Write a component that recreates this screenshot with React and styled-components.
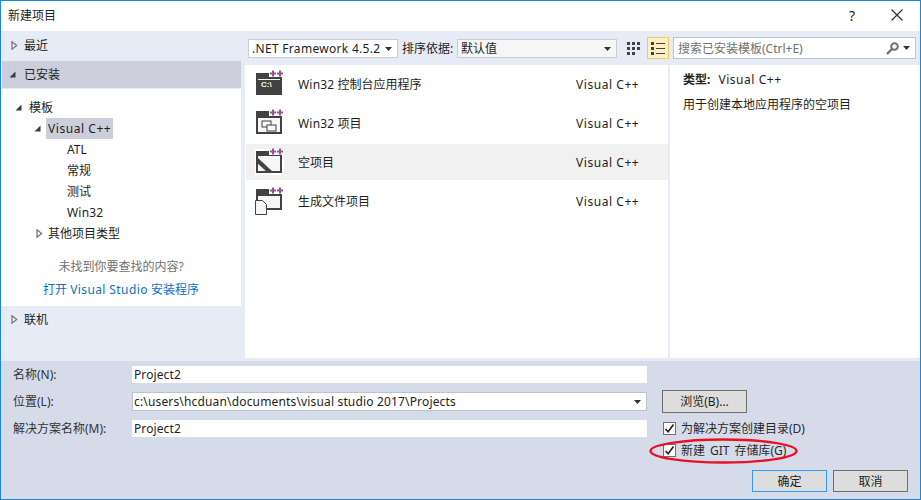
import React from 'react'
import styled, { createGlobalStyle } from 'styled-components'

const Global = createGlobalStyle`
  html, body { margin: 0; padding: 0; background: #fff; }
  body { font-family: "Noto Sans", "Noto Sans CJK SC", sans-serif; font-size: 12px; line-height: 17px; color: #1e1e1e; }
  * { box-sizing: border-box; }
`

// latin runs in the reference are wider than Noto Sans at this size
const Lat = styled.span`
  letter-spacing: ${p => (p.$s === undefined ? 0.55 : p.$s)}px;
`

const Window = styled.div`
  position: relative;
  width: 921px;
  height: 500px;
  border: 1px solid #1b86dc;
  display: flex;
  flex-direction: column;
  background: #fff;
  overflow: hidden;
`

const TitleBar = styled.div`
  height: 30px;
  display: flex;
  align-items: center;
  padding: 0 16px 2px 7px;
`
const Title = styled.div`
  flex: 1;
`
const HelpBtn = styled.div`
  width: 14px;
  font-size: 14px;
  margin-right: 31px;
  text-align: center;
`

const Main = styled.div`
  height: 330px;
  display: flex;
  background: #e6ebf5;
  padding-bottom: 3px;
`

const Sidebar = styled.div`
  width: 240px;
  display: flex;
  flex-direction: column;
`
const Section = styled.div`
  height: ${p => p.$h}px;
  display: flex;
  align-items: center;
  gap: 6px;
  padding: 0 0 2px 10px;
`
const ActiveSection = styled(Section)`
  gap: 8px;
  padding: 0 0 1px 7px;
  margin-left: 1px;
  background: #cccedb;
`
const SectionBottom = styled(Section)`
  align-items: flex-start;
  padding-top: 5px;
  flex: 1;

  svg {
    margin-top: 4px;
  }
`
const Tree = styled.div`
  height: 217px;
  background: #fff;
  margin-top: 1px;
  padding-top: 8px;
  display: flex;
  flex-direction: column;
`
const TreeRow = styled.div`
  height: 21px;
  line-height: 21px;
  display: flex;
  align-items: center;
  padding-left: ${p => p.$indent}px;
  gap: ${p => p.$gap || 7}px;
`
const Selected = styled.span`
  background: #cccedb;
  height: 21px;
  padding: 0 2px;
  margin-left: -2px;
`
const Hint = styled.div`
  margin-top: 12px;
  height: 21px;
  line-height: 21px;
  text-align: center;
  color: #717171;
`
const InstallLink = styled.div`
  margin-top: 2px;
  height: 21px;
  line-height: 21px;
  text-align: center;
  color: #0e70c0;
`

const Content = styled.div`
  flex: 1;
  display: flex;
  flex-direction: column;
  min-width: 0;
`
const Toolbar = styled.div`
  height: 34px;
  display: flex;
  align-items: center;
  padding-left: 7px;
`
const Combo = styled.div`
  width: ${p => p.$w}px;
  height: 19px;
  background: ${p => p.$bg || '#fff'};
  border: 1px solid #ccc;
  display: flex;
  align-items: center;
  justify-content: space-between;
  padding: 0 5px 0 3px;
  margin-top: 1px;
  white-space: nowrap;
`
const SortLabel = styled.div`
  width: 59px;
  padding-left: 4px;
  margin-top: 1px;
`
const ViewBtn = styled.div`
  width: 22px;
  height: 22px;
  margin-left: ${p => p.$ml}px;
  display: flex;
  align-items: center;
  justify-content: center;
  background: ${p => (p.$on ? '#fff0c4' : 'transparent')};
  border: 1px solid ${p => (p.$on ? '#f0c869' : 'transparent')};
`
const Search = styled.div`
  width: 243px;
  height: 22px;
  margin-left: 4px;
  background: #fff;
  border: 1px solid #bdc3ce;
  display: flex;
  align-items: center;
  justify-content: space-between;
  padding: 0 5px 0 4px;
  color: #717171;
`
const SearchIcons = styled.div`
  display: flex;
  align-items: center;
  gap: 4px;
`

const Panes = styled.div`
  flex: 1;
  display: flex;
  margin-left: 4px;
  background: #fff;
`
const List = styled.div`
  width: 425px;
  display: flex;
  flex-direction: column;
  gap: 3px;
  padding-top: 1px;
  border-right: 2px solid #e6ebf5;
`
const ListRow = styled.div`
  height: 36px;
  display: flex;
  align-items: center;
  margin-left: 1px;
  padding-left: 9px;
  background: ${p => (p.$active ? '#f1f1f1' : 'transparent')};
`
const RowIcon = styled.div`
  width: 30px;
  height: 30px;
  margin-right: 13px;
  flex: none;
`
const RowName = styled.div`
  width: 278px;
`
const Detail = styled.div`
  flex: 1;
  padding: 5px 13px;
`
const DetailLine = styled.div`
  height: 20px;
  line-height: 20px;
  margin-bottom: 5px;
`
const Bold = styled.span`
  font-weight: 700;
  margin-right: 8px;
`

const Footer = styled.div`
  flex: 1;
  background: #d6dbe9;
  display: grid;
  grid-template-columns: 119px 515px 1fr;
  grid-template-rows: 27px 27px 26px 1fr;
  padding: 4px 12px 0 12px;
  position: relative;
`
const FieldLabel = styled.div`
  color: #333;
  display: flex;
  align-items: center;
  height: 19px;
`
const Input = styled.div`
  height: 17px;
  background: #fff;
  margin-top: 1px;
  display: flex;
  align-items: center;
  padding: 0 5px 0 2px;
  white-space: nowrap;
`
const ComboInput = styled(Input)`
  height: 19px;
  margin-top: 0;
  border: 1px solid #bdc3ce;
  justify-content: space-between;
  padding-left: 1px;
`
const Button = styled.div`
  width: ${p => p.$w}px;
  height: ${p => p.$h}px;
  background: #dddddd;
  border: 1px solid ${p => (p.$primary ? '#3399ff' : '#707070')};
  display: flex;
  align-items: center;
  justify-content: center;
`
const BrowseCell = styled.div`
  padding-left: 15px;
  margin-top: -2px;
`
const Checks = styled.div`
  grid-column: 3;
  grid-row: 3 / 5;
  padding-left: 16px;
  display: flex;
  flex-direction: column;
  gap: 4px;
`
const CheckRow = styled.div`
  height: 18px;
  display: flex;
  align-items: center;
  gap: 5px;
  color: #2a2a2a;
`
const Box = styled.div`
  width: 13px;
  height: 13px;
  background: #fff;
  border: 1px solid #707070;
  display: flex;
  align-items: center;
  justify-content: center;
`
const Actions = styled.div`
  display: flex;
  gap: 6px;
  padding-left: 89px;
  margin-top: 7px;
`
const Ellipse = styled.svg`
  position: absolute;
  left: 648px;
  top: 436px;
  pointer-events: none;
`

const Dark = '#424242'
const Purple = '#9b4f96'

const Arrow = ({ open }) =>
  open ? (
    <svg width="7" height="7" viewBox="0 0 7 7" style={{ flex: 'none' }}>
      <path d="M6.5 .5V6.5H.5Z" fill="#3c3c3c" />
    </svg>
  ) : (
    <svg width="7" height="9" viewBox="0 0 7 9" style={{ flex: 'none' }}>
      <path d="M1 .8L5.6 4.5 1 8.2Z" fill="#fff" stroke="#777" strokeWidth="1.3" />
    </svg>
  )

const Caret = () => (
  <svg width="7" height="4" viewBox="0 0 7 4">
    <path d="M0 0H7L3.5 4Z" fill="#333" />
  </svg>
)

const Plus = () => (
  <g fill={Purple} transform="translate(1 -1)">
    <path d="M16 2.5h2v2h2v2h-2v2h-2v-2h-2v-2h2z" />
    <path d="M23 2.5h2v2h2v2h-2v2h-2v-2h-2v-2h2z" />
  </g>
)

const IconConsole = () => (
  <svg width="30" height="30" viewBox="0 0 30 30">
    <path d="M1 4H14V8H27V26H1Z" fill={Dark} />
    <rect x="3" y="10" width="22" height="1" fill="#f6f6f6" />
    <text x="6" y="18" fontSize="8" fontWeight="700" fill="#fff" fontFamily="Liberation Sans, sans-serif">C:\</text>
    <Plus />
  </svg>
)

const IconWin = () => (
  <svg width="30" height="30" viewBox="0 0 30 30">
    <path d="M2 9H26V25H2Z" fill="#f6f6f6" stroke={Dark} strokeWidth="2" />
    <path d="M1 3H14V8H27V10H1Z" fill={Dark} />
    <rect x="7" y="13" width="9" height="6" fill="#f6f6f6" stroke={Dark} />
    <rect x="12" y="17" width="9" height="6" fill="#f6f6f6" stroke={Dark} />
    <Plus />
  </svg>
)

const IconEmpty = () => (
  <svg width="30" height="30" viewBox="0 0 30 30">
    <rect x="0" y="2" width="29" height="26" fill="#fff" />
    <rect x="2" y="8" width="24" height="17" fill="#f6f6f6" />
    <path d="M2 8V25H26V8" fill="none" stroke={Dark} strokeWidth="2" />
    <path d="M1 4H14V8H27V9H1Z" fill={Dark} />
    <path d="M1 11H3L18 25H12L1 15Z" fill={Dark} />
    <Plus />
  </svg>
)

const IconMake = () => (
  <svg width="30" height="30" viewBox="0 0 30 30">
    <path d="M2 14V9H26V23H12" fill="#f6f6f6" stroke={Dark} strokeWidth="2" />
    <path d="M1 3H14V8H27V10H1Z" fill={Dark} />
    <path d="M.5 14.5H7.5L11.5 18.5V28.5H.5Z" fill="#f6f6f6" stroke={Dark} />
    <Plus />
  </svg>
)

const GridIcon = () => (
  <svg width="13" height="13" viewBox="0 0 13 13" fill={Dark}>
    <path d="M0 0h3v3H0zM5 0h3v3H5zM10 0h3v3h-3zM0 5h3v3H0zM5 5h3v3H5zM10 5h3v3h-3zM0 10h3v3H0zM5 10h3v3H5z" />
  </svg>
)

const ListIcon = () => (
  <svg width="14" height="13" viewBox="0 0 14 13" fill={Dark}>
    <path d="M0 0h3v3H0zM5 1h9v1H5zM0 5h3v3H0zM5 6h9v1H5zM0 10h3v3H0zM5 11h9v1H5z" />
  </svg>
)

const SearchIcon = () => (
  <svg width="13" height="13" viewBox="0 0 13 13">
    <circle cx="8.5" cy="4.5" r="3.3" fill="none" stroke="#717171" strokeWidth="2" />
    <path d="M6 7L1 12" stroke="#717171" strokeWidth="2.4" />
  </svg>
)

const Check = () => (
  <svg width="11" height="11" viewBox="0 0 11 11">
    <path d="M1.5 6L4.2 8.8 9.5 1.5" fill="none" stroke="#222" strokeWidth="1.7" />
  </svg>
)

const templates = [
  { name: <><Lat $s={0.2}>Win32</Lat> 控制台应用程序</>, icon: <IconConsole /> },
  { name: <><Lat $s={0.2}>Win32</Lat> 项目</>, icon: <IconWin /> },
  { name: '空项目', icon: <IconEmpty />, active: true },
  { name: '生成文件项目', icon: <IconMake /> },
]

export default function App() {
  return (
    <>
      <Global />
      <Window>
        <TitleBar>
          <Title>新建项目</Title>
          <HelpBtn>?</HelpBtn>
          <svg width="14" height="14" viewBox="0 0 14 14">
            <path d="M1.5 1.5L12.5 12.5M12.5 1.5L1.5 12.5" stroke="#333" strokeWidth="1.2" />
          </svg>
        </TitleBar>

        <Main>
          <Sidebar>
            <Section $h={30}><Arrow />最近</Section>
            <ActiveSection $h={27}><Arrow open />已安装</ActiveSection>
            <Tree>
              <TreeRow $indent={14}><Arrow open />模板</TreeRow>
              <TreeRow $indent={33}><Arrow open /><Selected><Lat>Visual C++</Lat></Selected></TreeRow>
              <TreeRow $indent={66}>ATL</TreeRow>
              <TreeRow $indent={66}>常规</TreeRow>
              <TreeRow $indent={66}>测试</TreeRow>
              <TreeRow $indent={66}><Lat $s={0.2}>Win32</Lat></TreeRow>
              <TreeRow $indent={35} $gap={5}><Arrow />其他项目类型</TreeRow>
              <Hint>未找到你要查找的内容?</Hint>
              <InstallLink>打开 <Lat $s={0.4}>Visual Studio</Lat> 安装程序</InstallLink>
            </Tree>
            <SectionBottom $h={53}><Arrow />联机</SectionBottom>
          </Sidebar>

          <Content>
            <Toolbar>
              <Combo $w={150}><Lat $s={0.3}>.NET Framework 4.5.2</Lat><Caret /></Combo>
              <SortLabel>排序依据:</SortLabel>
              <Combo $w={160} $bg="#f6f6f6">默认值<Caret /></Combo>
              <ViewBtn $ml={5}><GridIcon /></ViewBtn>
              <ViewBtn $ml={3} $on><ListIcon /></ViewBtn>
              <Search>
                <span>搜索已安装模板(Ctrl+E)</span>
                <SearchIcons><SearchIcon /><Caret /></SearchIcons>
              </Search>
            </Toolbar>
            <Panes>
              <List>
                {templates.map((t, i) => (
                  <ListRow key={i} $active={t.active}>
                    <RowIcon>{t.icon}</RowIcon>
                    <RowName>{t.name}</RowName>
                    <Lat>Visual C++</Lat>
                  </ListRow>
                ))}
              </List>
              <Detail>
                <DetailLine><Bold>类型:</Bold><Lat>Visual C++</Lat></DetailLine>
                <DetailLine>用于创建本地应用程序的空项目</DetailLine>
              </Detail>
            </Panes>
          </Content>
        </Main>

        <Footer>
          <FieldLabel>名称(N):</FieldLabel>
          <Input><Lat $s={0.1}>Project2</Lat></Input>
          <div />
          <FieldLabel>位置(L):</FieldLabel>
          <ComboInput><Lat $s={0.16}>c:\users\hcduan\documents\visual studio 2017\Projects</Lat><Caret /></ComboInput>
          <BrowseCell><Button $w={85} $h={23}>浏览(B)...</Button></BrowseCell>
          <FieldLabel>解决方案名称(M):</FieldLabel>
          <Input><Lat $s={0.1}>Project2</Lat></Input>
          <Checks>
            <CheckRow><Box><Check /></Box>为解决方案创建目录(D)</CheckRow>
            <CheckRow><Box><Check /></Box>新建 <Lat $s={0}>GIT</Lat> 存储库(G)</CheckRow>
            <Actions>
              <Button $w={75} $h={22} $primary>确定</Button>
              <Button $w={75} $h={22}>取消</Button>
            </Actions>
          </Checks>
        </Footer>

        <Ellipse width="150" height="28" viewBox="0 0 150 28">
          <ellipse cx="74.5" cy="14" rx="73" ry="11.5" fill="none" stroke="#e81123" strokeWidth="2.4" />
        </Ellipse>
      </Window>
    </>
  )
}
